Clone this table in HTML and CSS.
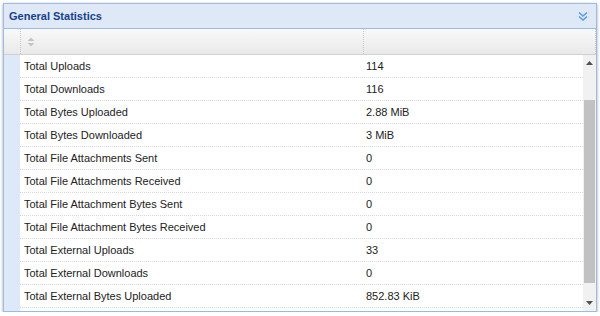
FILE: index.html
```html
<!DOCTYPE html>
<html>
<head>
<meta charset="utf-8">
<link rel="stylesheet" href="styles.css">
</head>
<body>
<div class="wrap">
  <div class="panel">
    <div class="hdr">
      <span class="title">General Statistics</span>
      <svg class="chev" width="10" height="10" viewBox="0 0 10 10"><path d="M1 1.5 L5 5 L9 1.5 M1 5.5 L5 9 L9 5.5" fill="none" stroke="#5a9ee6" stroke-width="1.6"/></svg>
    </div>
    <div class="colhdr">
      <div class="ch-num"></div>
      <div class="ch-name"><svg width="8" height="10" viewBox="0 0 8 10"><path d="M4 0.5 L7.5 4 L0.5 4 Z M4 9.5 L7.5 6 L0.5 6 Z" fill="#c4c4c4"/></svg></div>
      <div class="ch-val"></div>
    </div>
    <div class="body">
      <div class="numcol"></div>
      <div class="rows">
        <div class="row"><div class="c-name">Total Uploads</div><div class="c-val">114</div></div>
        <div class="row"><div class="c-name">Total Downloads</div><div class="c-val">116</div></div>
        <div class="row"><div class="c-name">Total Bytes Uploaded</div><div class="c-val">2.88 MiB</div></div>
        <div class="row"><div class="c-name">Total Bytes Downloaded</div><div class="c-val">3 MiB</div></div>
        <div class="row"><div class="c-name">Total File Attachments Sent</div><div class="c-val">0</div></div>
        <div class="row"><div class="c-name">Total File Attachments Received</div><div class="c-val">0</div></div>
        <div class="row"><div class="c-name">Total File Attachment Bytes Sent</div><div class="c-val">0</div></div>
        <div class="row"><div class="c-name">Total File Attachment Bytes Received</div><div class="c-val">0</div></div>
        <div class="row"><div class="c-name">Total External Uploads</div><div class="c-val">33</div></div>
        <div class="row"><div class="c-name">Total External Downloads</div><div class="c-val">0</div></div>
        <div class="row"><div class="c-name">Total External Bytes Uploaded</div><div class="c-val">852.83 KiB</div></div>
      </div>
      <div class="sb">
        <div class="sb-btn"><svg width="7" height="4" viewBox="0 0 7 4"><path d="M3.5 0 L7 4 L0 4 Z" fill="#505050"/></svg></div>
        <div class="sb-track"><div class="sb-thumb"></div></div>
        <div class="sb-btn"><svg width="7" height="4" viewBox="0 0 7 4"><path d="M0 0 L7 0 L3.5 4 Z" fill="#505050"/></svg></div>
      </div>
    </div>
  </div>
</div>
</body>
</html>
```
FILE: styles.css
```css
html, body { margin: 0; padding: 0; background: #fff; }
body { font-family: "Liberation Sans", Arial, sans-serif; font-size: 11px; color: #000; }
.wrap { padding: 3px 3px 0 3px; }
.panel {
  width: 592px; height: 307px;
  border: 1px solid #99bbe8;
  box-shadow: 0 1px 3px rgba(0,0,0,0.35);
  display: flex; flex-direction: column; overflow: hidden;
}
.hdr {
  height: 25px; box-sizing: border-box; flex: none;
  background: #dfe8f6;
  border-bottom: 1px solid #99bbe8;
  display: flex; align-items: center; justify-content: space-between;
  padding: 0 8px 0 5px;
}
.title { font-weight: bold; font-size: 11px; color: #15428b; }
.chev { display: block; }
.colhdr {
  height: 26px; box-sizing: border-box; display: flex; flex: none;
  background: linear-gradient(#f9f9f9, #e9e9e9);
  border-bottom: 1px solid #d0d0d0;
}
.ch-num { width: 16px; border-right: 1px dotted #c8c8c8; }
.ch-name { width: 343px; border-right: 1px dotted #c8c8c8; display: flex; align-items: center; padding-left: 6px; box-sizing: border-box; }
.ch-name svg { display: block; }
.ch-val { flex: 1; border-right: 1px dotted #c8c8c8; }
.body { flex: 1; display: flex; min-height: 0; }
.numcol { width: 16px; background: #dde8f8; }
.rows { flex: 1; overflow: hidden; }
.row { height: 23px; box-sizing: border-box; display: flex; align-items: center; border-bottom: 1px dotted #d6d6d6; }
.c-name { width: 344px; padding-left: 4px; box-sizing: border-box; color: #222; }
.c-val { flex: 1; padding-left: 2px; color: #222; }
.sb { width: 13px; background: #f1f1f1; display: flex; flex-direction: column; }
.sb-btn { height: 16px; display: flex; align-items: center; justify-content: center; }
.sb-btn svg { display: block; }
.sb-track { flex: 1; display: flex; flex-direction: column; padding: 29px 1px 12px 1px; }
.sb-thumb { flex: 1; background: #c1c1c1; }
```
